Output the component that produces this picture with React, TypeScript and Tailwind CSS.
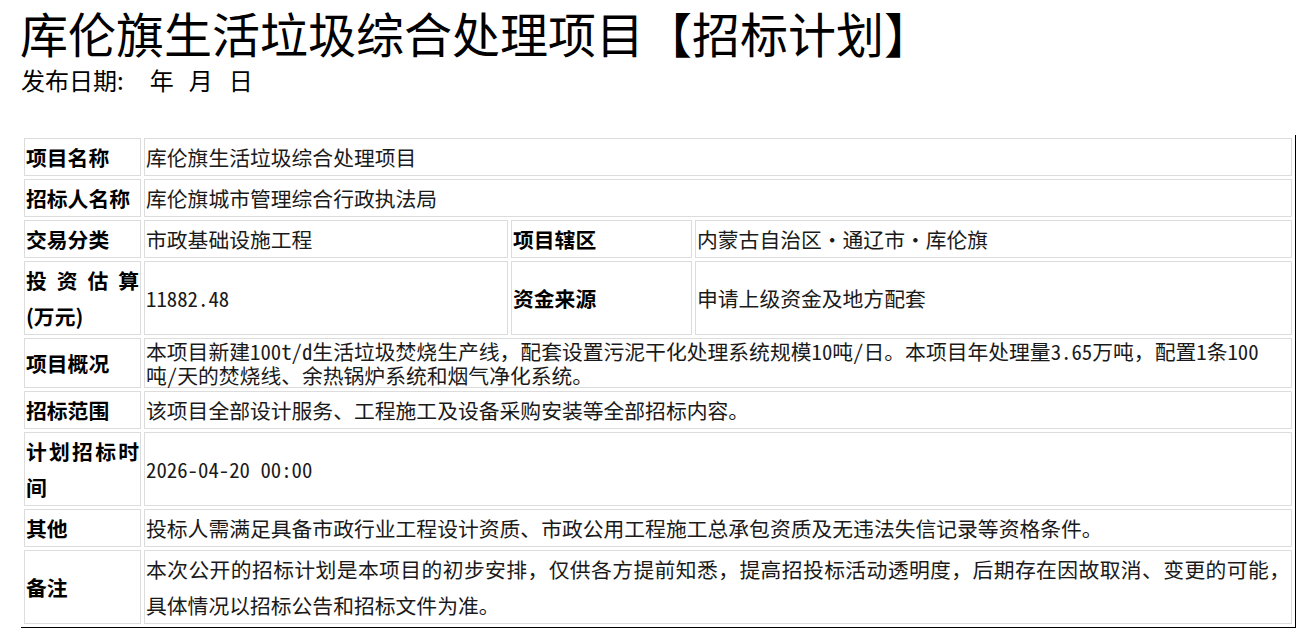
import React from "react";

const labelCls =
  "border border-[#dcdcdc] px-[1px] py-0 align-middle text-left font-bold text-black text-[20.8px] leading-[36px] text-justify [font-family:'Noto_Sans_CJK_SC',sans-serif]";
const valueCls =
  "border border-[#dcdcdc] px-[1px] py-0 align-middle text-left text-[#1a1a1a] text-[20.8px] leading-[36px] [font-family:'Noto_Sans_Mono_CJK_SC','Noto_Sans_CJK_SC',monospace]";

export default function App() {
  return (
    <div className="min-h-screen bg-white pl-[21px] pt-[2px] text-black [font-family:'Noto_Sans_CJK_SC',sans-serif]">
      <h1 className="-ml-[1px] text-[48px] leading-[60px] font-normal whitespace-nowrap">
        库伦旗生活垃圾综合处理项目【招标计划】
      </h1>
      <div className="mt-[1px] text-[24px] leading-[34px]">
        <span>发布日期:</span>
        <span className="ml-[26px]">年</span>
        <span className="ml-[15px]">月</span>
        <span className="ml-[16px]">日</span>
      </div>
      <table className="mt-[38px] w-[1275px] table-fixed border-separate border-spacing-[3px] border-r border-b border-black">
        <colgroup>
          <col className="w-[117px]" />
          <col className="w-[364px]" />
          <col className="w-[181px]" />
          <col />
        </colgroup>
        <tbody>
          <tr>
            <td className={labelCls}>项目名称</td>
            <td className={valueCls} colSpan={3}>
              库伦旗生活垃圾综合处理项目
            </td>
          </tr>
          <tr>
            <td className={labelCls}>招标人名称</td>
            <td className={valueCls} colSpan={3}>
              库伦旗城市管理综合行政执法局
            </td>
          </tr>
          <tr>
            <td className={labelCls}>交易分类</td>
            <td className={valueCls}>市政基础设施工程</td>
            <td className={labelCls}>项目辖区</td>
            <td className={valueCls}>内蒙古自治区・通辽市・库伦旗</td>
          </tr>
          <tr>
            <td className={labelCls}>
              <div className="[text-align-last:justify]">投资估算</div>
              <div>(万元)</div>
            </td>
            <td className={valueCls}>11882.48</td>
            <td className={labelCls}>资金来源</td>
            <td className={valueCls}>申请上级资金及地方配套</td>
          </tr>
          <tr>
            <td className={labelCls}>项目概况</td>
            <td className={valueCls + " !leading-[24px]"} colSpan={3}>
              本项目新建100t/d生活垃圾焚烧生产线，配套设置污泥干化处理系统规模10吨/日。本项目年处理量3.65万吨，配置1条100
              <br />
              吨/天的焚烧线、余热锅炉系统和烟气净化系统。
            </td>
          </tr>
          <tr>
            <td className={labelCls}>招标范围</td>
            <td className={valueCls} colSpan={3}>
              该项目全部设计服务、工程施工及设备采购安装等全部招标内容。
            </td>
          </tr>
          <tr>
            <td className={labelCls}>
              <div className="[text-align-last:justify]">计划招标时</div>
              <div>间</div>
            </td>
            <td className={valueCls} colSpan={3}>
              2026-04-20 00:00
            </td>
          </tr>
          <tr>
            <td className={labelCls}>其他</td>
            <td className={valueCls} colSpan={3}>
              投标人需满足具备市政行业工程设计资质、市政公用工程施工总承包资质及无违法失信记录等资格条件。
            </td>
          </tr>
          <tr>
            <td className={labelCls}>备注</td>
            <td className={valueCls} colSpan={3}>
              <div className="[text-align-last:justify] text-justify whitespace-nowrap">
                本次公开的招标计划是本项目的初步安排，仅供各方提前知悉，提高招投标活动透明度，后期存在因故取消、变更的可能，
              </div>
              <div>具体情况以招标公告和招标文件为准。</div>
            </td>
          </tr>
        </tbody>
      </table>
    </div>
  );
}
